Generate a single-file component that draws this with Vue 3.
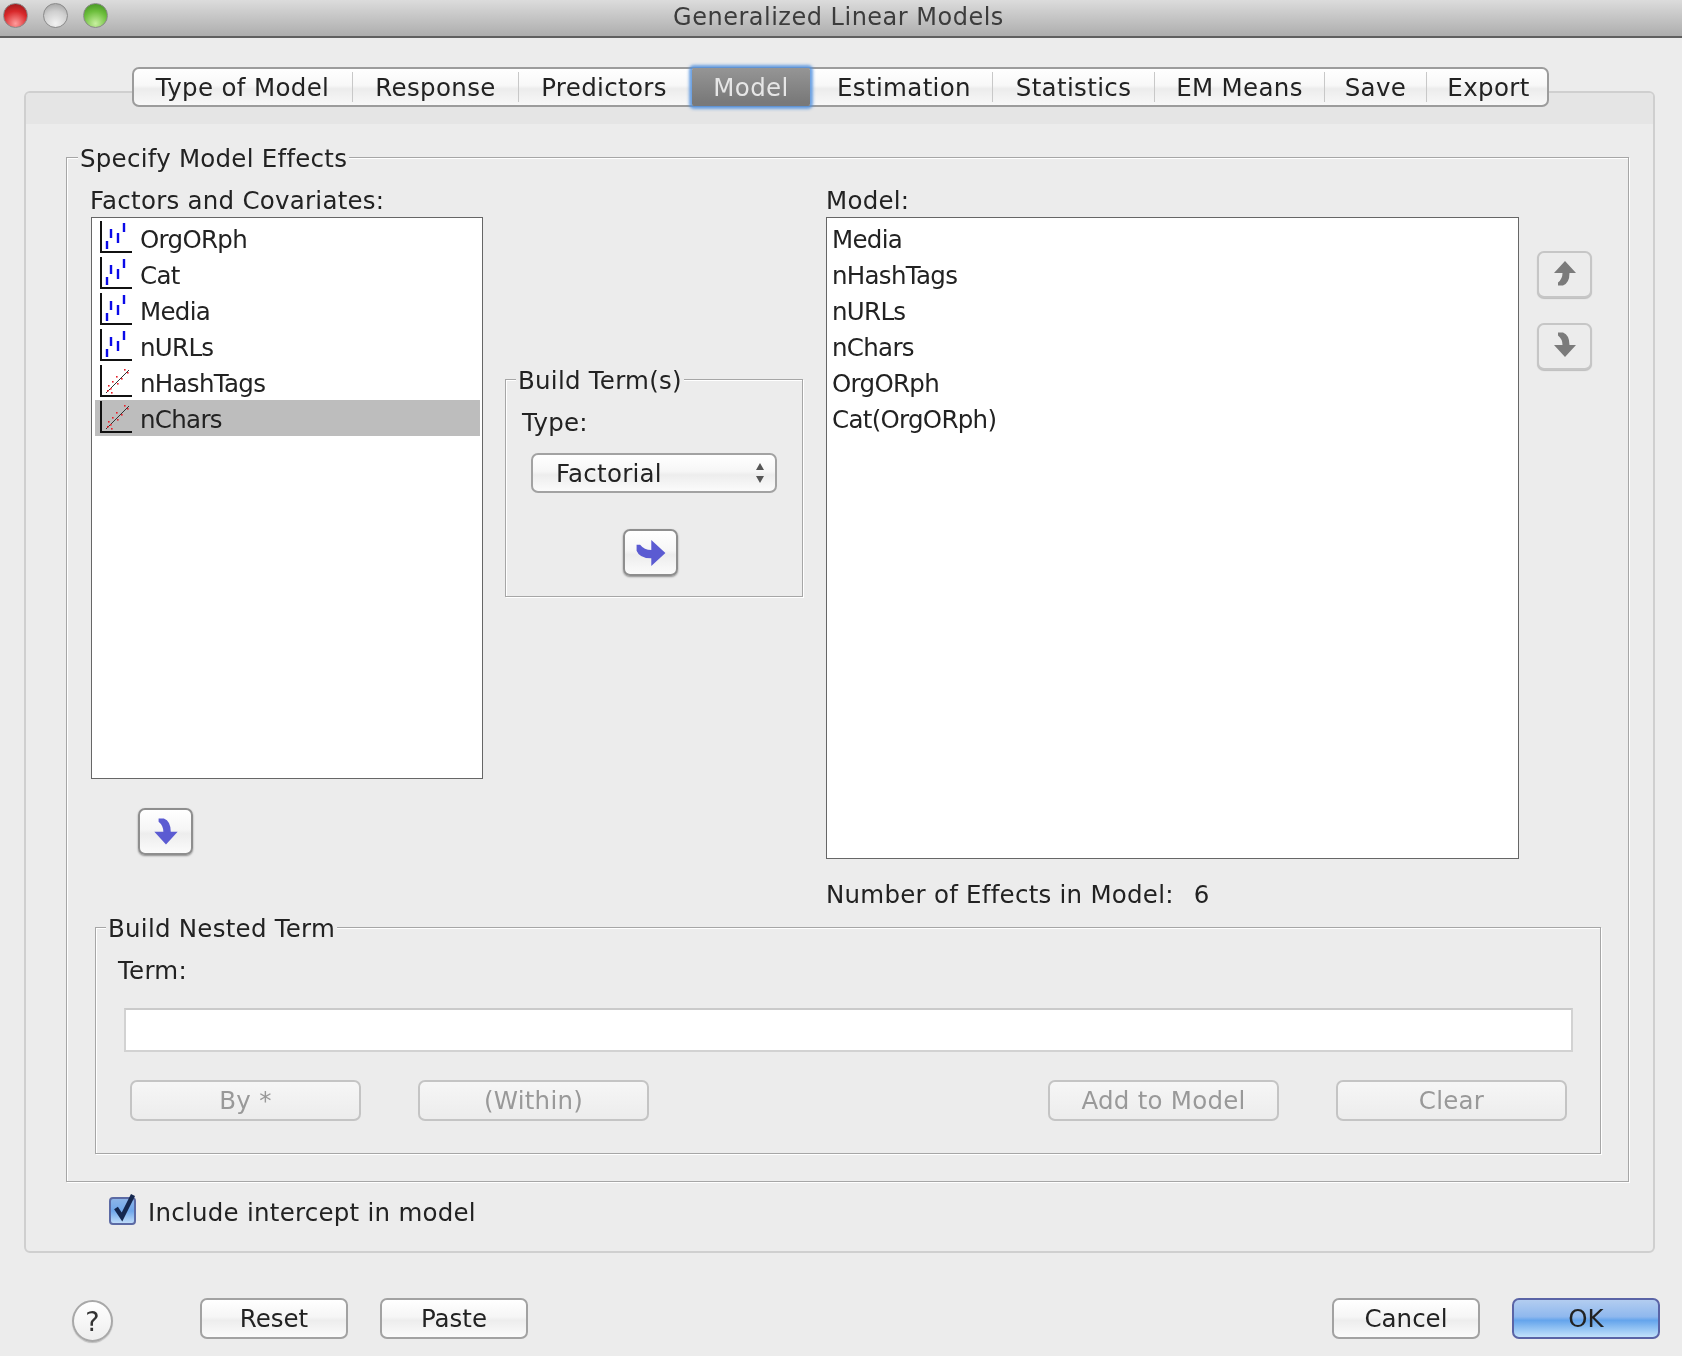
<script setup>
const tabs = [
  { label: 'Type of Model', w: 219 }, { label: 'Response', w: 166 }, { label: 'Predictors', w: 171 },
  { label: 'Model', w: 126, active: true }, { label: 'Estimation', w: 177 }, { label: 'Statistics', w: 162 },
  { label: 'EM Means', w: 170 }, { label: 'Save', w: 102 }, { label: 'Export', w: 124 }
]
const columns = tabs.map(t => t.w + 'px').join(' ')
const factors = [
  { name: 'OrgORph', kind: 'nominal' }, { name: 'Cat', kind: 'nominal' }, { name: 'Media', kind: 'nominal' },
  { name: 'nURLs', kind: 'nominal' }, { name: 'nHashTags', kind: 'scale' }, { name: 'nChars', kind: 'scale', selected: true }
]
const model = ['Media', 'nHashTags', 'nURLs', 'nChars', 'OrgORph', 'Cat(OrgORph)']
const dots = [[7,25],[8,20],[11,27],[12,16],[17,18],[16,11],[24,4],[27,7],[21,13],[10,23]]
const arrow = 'M4 0.5L9 0.5Q15.5 3 15.5 13L22 13L11 25L0 13L8.5 13Q8.5 7 4 3.5Z'
</script>

<template>
  <div class="window">
    <header class="titlebar">
      <div class="lights">
        <span class="light red"></span><span class="light gray"></span><span class="light green"></span>
      </div>
      <span class="title">Generalized Linear Models</span>
    </header>

    <nav class="tabs" :style="{ gridTemplateColumns: columns }">
      <div v-for="t in tabs" :key="t.label" class="tab" :class="{ active: t.active }">{{ t.label }}</div>
    </nav>

    <main class="panel">
      <div class="strip"></div>
      <section class="group effects">
        <span class="legend">Specify Model Effects</span>
        <div class="columns">
          <div class="col-left">
            <div class="label factors-label">Factors and Covariates:</div>
            <div class="list list-factors">
              <div v-for="f in factors" :key="f.name" class="row" :class="{ selected: f.selected }">
                <svg class="var-icon" width="32" height="32" viewBox="0 0 32 32">
                  <path d="M1 0V31H32" fill="none" stroke="#111" stroke-width="2" />
                  <template v-if="f.kind === 'nominal'">
                    <path d="M7 20V28M11 8V17M18 12V22M24 2V11" stroke="#0a0ae8" stroke-width="2.4" />
                  </template>
                  <template v-else>
                    <path d="M6 28L29 5" stroke="#333" stroke-width="1" />
                    <rect v-for="d in dots" :key="d[0] + '-' + d[1]" :x="d[0]" :y="d[1]" width="1.6" height="1.6" fill="#e8202a" />
                  </template>
                </svg>
                <span>{{ f.name }}</span>
              </div>
            </div>
            <button class="btn icon-btn move-down">
              <svg width="24" height="27" viewBox="0 0 22 25.5"><path :d="arrow" fill="#5b5bd2" /></svg>
            </button>
          </div>

          <div class="col-middle">
            <section class="group build">
              <span class="legend">Build Term(s)</span>
              <div class="label type-label">Type:</div>
              <div class="btn combo">
                <span>Factorial</span>
                <svg width="10" height="22" viewBox="0 0 10 22"><path d="M5 1L9 8H1ZM1 14H9L5 21Z" fill="#555" /></svg>
              </div>
              <button class="btn icon-btn build-go">
                <svg width="30" height="26" viewBox="0 0 25.5 22"><path :d="arrow" fill="#5b5bd2" transform="matrix(0 1 1 0 0 0)" /></svg>
              </button>
            </section>
          </div>

          <div class="col-model">
            <div class="label">Model:</div>
            <div class="list list-model">
              <div v-for="m in model" :key="m" class="row">{{ m }}</div>
            </div>
            <div class="count"><span>Number of Effects in Model:</span><span>6</span></div>
          </div>

          <div class="col-order">
            <button class="btn icon-btn muted">
              <svg width="22" height="26" viewBox="0 0 22 26"><path :d="arrow" fill="#7b7b7b" transform="matrix(1 0 0 -1 0 26)" /></svg>
            </button>
            <button class="btn icon-btn muted">
              <svg width="22" height="26" viewBox="0 0 22 26"><path :d="arrow" fill="#7b7b7b" /></svg>
            </button>
          </div>
        </div>

        <section class="group nested">
          <span class="legend">Build Nested Term</span>
          <div class="label term-label">Term:</div>
          <div class="term-input"></div>
          <div class="nested-actions">
            <div class="pair">
              <div class="btn disabled">By *</div>
              <div class="btn disabled">(Within)</div>
            </div>
            <div class="pair">
              <div class="btn disabled">Add to Model</div>
              <div class="btn disabled">Clear</div>
            </div>
          </div>
        </section>
      </section>

      <div class="check-row">
        <svg class="check" width="28" height="32" viewBox="0 0 28 32">
          <defs>
            <linearGradient id="chk" x1="0" y1="0" x2="0" y2="1">
              <stop offset="0" stop-color="#8fb6e8" /><stop offset=".5" stop-color="#6fa6ea" /><stop offset="1" stop-color="#c4e0fb" />
            </linearGradient>
          </defs>
          <rect x="1" y="5" width="25" height="26" rx="3" fill="url(#chk)" stroke="#5c6aa4" stroke-width="2" />
          <path d="M7 15L13 24L24 2" fill="none" stroke="#15274f" stroke-width="4.5" />
        </svg>
        <span>Include intercept in model</span>
      </div>
    </main>

    <footer class="footer">
      <div class="help">?</div>
      <div class="btn action reset">Reset</div>
      <div class="btn action paste">Paste</div>
      <div class="btn action cancel">Cancel</div>
      <div class="btn action ok">OK</div>
    </footer>
  </div>
</template>

<style>
html, body { margin: 0; background: #ececec; }
</style>

<style scoped>
* { box-sizing: border-box; }
.window {
  width: 1682px; height: 1356px; overflow: hidden; background: #ececec; color: #222;
  font-family: "DejaVu Sans", sans-serif; font-size: 24.5px; letter-spacing: .25px;
  display: flex; flex-direction: column; filter: blur(.45px);
}
.titlebar {
  height: 38px; flex: none; position: relative; display: flex; align-items: center; justify-content: center;
  background: linear-gradient(#dcdcdc, #adadad); border-bottom: 2px solid #5f5f5f;
}
.title { color: #3c3c3c; margin: -3px 5px 0 0; font-size: 24px; letter-spacing: .5px; }
.lights { position: absolute; left: 3px; top: 3px; display: flex; gap: 15px; }
.light { width: 25px; height: 25px; border-radius: 50%; border: 1px solid #8a8a8a; }
.red { background: radial-gradient(circle at 50% 85%, #ff9c9c, #d8282a 55%, #8c1518); }
.gray { background: radial-gradient(circle at 50% 85%, #f2f2f2, #cfcfcf 55%, #9a9a9a); }
.green { background: radial-gradient(circle at 50% 85%, #c8f0a0, #6cbe3c 55%, #3c8a1c); }

.tabs {
  position: relative; z-index: 2; display: grid; width: 1417px; height: 40px; margin: 29px 0 0 132px; flex: none;
  background: linear-gradient(#fff 0, #f8f8f8 45%, #ececec 55%, #f8f8f8 100%);
  border: 2px solid #9c9c9c; border-radius: 7px; letter-spacing: .35px;
}
.tab { display: flex; align-items: center; justify-content: center; position: relative; height: 36px; margin-left: -1px; }
.tab:first-child { margin-left: -2px; }
.tab:not(:first-child)::before {
  content: ""; position: absolute; left: 0; top: 3px; bottom: 3px; width: 1px; background: #c8c8c8;
}
.tab.active::before, .tab.active + .tab::before { display: none; }
.tab.active {
  height: 38px; margin: -1px 6px 0 2px; color: #e6e6e6;
  background: linear-gradient(#959595, #797979 90%);
  box-shadow: 0 0 3px 3px rgba(84, 146, 222, .85);
  border-radius: 2px;
}

.panel {
  height: 1162px; margin: -16px 27px 0 24px; flex: none; background: #ececec;
  border: 2px solid #cfcfcf; border-radius: 6px; display: flex; flex-direction: column;
}
.strip { height: 31px; flex: none; background: #e5e5e5; border-radius: 4px 4px 0 0; }

.group { position: relative; border: 1px solid #a6a6a6; box-shadow: 1px 1px 0 #fff, inset 1px 1px 0 #fff; }
.legend {
  position: absolute; top: -13px; height: 28px; line-height: 28px; padding: 0 2px; background: #ececec; white-space: nowrap;
}
.effects { height: 1025px; margin: 33px 24px 0 40px; padding: 29px 0 0 24px; flex: none; }
.effects > .legend { left: 11px; }
.columns { display: flex; align-items: flex-start; height: 740px; }
.label { height: 28px; line-height: 28px; white-space: nowrap; }
.factors-label { margin-left: -1px; }
.col-left { width: 392px; flex: none; }
.col-middle { width: 298px; margin: 192px 23px 0 22px; flex: none; }
.col-model { width: 693px; flex: none; }
.col-order { margin: 64px 0 0 18px; display: flex; flex-direction: column; gap: 25px; }

.list { margin-top: 2px; background: #fff; border: 1px solid #666; padding: 2px 2px 0 3px; letter-spacing: -.7px; }
.list-factors { height: 562px; }
.list-model { height: 642px; }
.row { height: 36px; display: flex; align-items: center; padding: 2px 0 0 5px; white-space: nowrap; }
.row.selected { background: #bdbdbd; }
.list-model .row { padding-left: 2px; }
.var-icon { flex: none; margin-right: 8px; margin-top: -4px; }

.btn {
  display: flex; align-items: center; justify-content: center; padding: 0; font: inherit; color: inherit; letter-spacing: inherit;
  background: linear-gradient(#fff 0, #f6f6f6 45%, #ededed 55%, #fbfbfb 100%);
  border: 2px solid #a2a2a2; border-radius: 7px;
}
.icon-btn { width: 55px; height: 47px; border-color: #8e8e8e; box-shadow: 0 1px 2px rgba(0,0,0,.4); }
.move-down { margin: 29px 0 0 47px; }
.muted { background: #ececec; border-color: #c6c6c6; box-shadow: 0 1px 1px rgba(0,0,0,.2); }
.muted svg { margin-top: -3px; }

.build { height: 218px; padding-top: 29px; }
.build .legend { left: 10px; }
.type-label { margin-left: 16px; }
.combo { width: 246px; height: 40px; margin: 16px 0 0 25px; justify-content: space-between; padding: 0 10px 0 23px; }
.build-go { margin: 36px 0 0 117px; }

.count { margin-top: 22px; display: flex; gap: 20px; height: 28px; line-height: 28px; white-space: nowrap; }

.nested { height: 227px; margin: 0 27px 0 4px; padding-top: 29px; }
.nested .legend { left: 10px; }
.term-label { margin-left: 22px; }
.term-input { height: 44px; margin: 23px 27px 0 28px; background: #fff; border: 2px solid #d2d2d2; border-top-color: #cacaca; }
.nested-actions { display: flex; justify-content: space-between; margin: 28px 33px 0 34px; }
.pair { display: flex; gap: 57px; }
.disabled { width: 231px; height: 41px; color: #999; border-color: #c4c4c4; background: linear-gradient(#f6f6f6, #ececec); }

.check-row { display: flex; align-items: flex-end; margin: 11px 0 0 83px; height: 32px; gap: 11px; }
.check-row span { line-height: 28px; height: 28px; margin-bottom: -2px; }
.check { flex: none; }

.footer { flex: none; height: 41px; margin-top: 45px; display: flex; align-items: flex-start; position: relative; padding-left: 72px; letter-spacing: 0; }
.help {
  width: 41px; height: 42px; margin-top: 2px; border-radius: 50%; border: 2px solid #a8a8a8; background: linear-gradient(#fff, #eee);
  display: flex; align-items: center; justify-content: center; font-size: 27px; color: #333; box-shadow: 0 1px 1px rgba(0,0,0,.2);
}
.action { width: 148px; height: 41px; }
.reset { margin-left: 87px; }
.paste { margin-left: 32px; }
.cancel { margin-left: auto; }
.ok {
  margin: 0 22px 0 32px; border-color: #5a64a6;
  background: linear-gradient(#b3cdf0 0, #8fb8ee 45%, #64a4ec 55%, #c2e2fb 100%);
}
</style>
